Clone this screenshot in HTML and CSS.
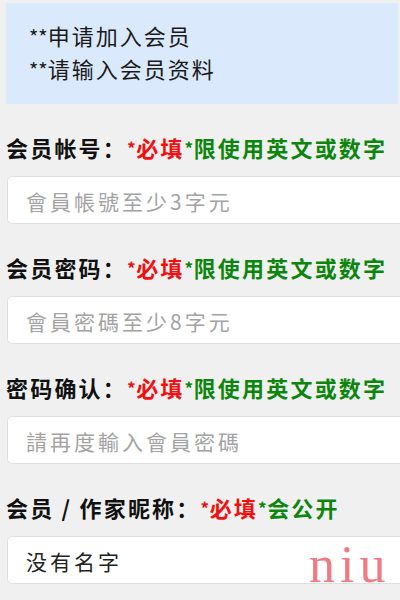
FILE: index.html
```html
<!DOCTYPE html>
<html lang="zh-CN">
<head>
<meta charset="utf-8">
<title>会员注册</title>
<link rel="stylesheet" href="styles.css">
</head>
<body>
<div class="page">
  <div class="notice">
    <p class="notice-line"><span class="stars">**</span>申请加入会员</p>
    <p class="notice-line"><span class="stars">**</span>请输入会员资料</p>
  </div>

  <form class="form">
    <div class="field">
      <label class="label">会员帐号：<span class="req"><span class="star">*</span>必填</span><span class="hint"><span class="star">*</span>限使用英文或数字</span></label>
      <input class="input" type="text" placeholder="會員帳號至少3字元">
    </div>
    <div class="field">
      <label class="label">会员密码：<span class="req"><span class="star">*</span>必填</span><span class="hint"><span class="star">*</span>限使用英文或数字</span></label>
      <input class="input" type="text" placeholder="會員密碼至少8字元">
    </div>
    <div class="field">
      <label class="label">密码确认：<span class="req"><span class="star">*</span>必填</span><span class="hint"><span class="star">*</span>限使用英文或数字</span></label>
      <input class="input" type="text" placeholder="請再度輸入會員密碼">
    </div>
    <div class="field">
      <label class="label">会员 / 作家昵称：<span class="req"><span class="star">*</span>必填</span><span class="hint"><span class="star">*</span>会公开</span></label>
      <input class="input" type="text" value="没有名字">
    </div>
  </form>
</div>
<div class="watermark">niu</div>
</body>
</html>
```

FILE: styles.css
```css
html, body {
  margin: 0;
  padding: 0;
}

body {
  background: #f0f0f0;
  font-family: "Noto Sans CJK SC", "Noto Sans", sans-serif;
  width: 400px;
  height: 600px;
  overflow: hidden;
  position: relative;
}

.page {
  padding: 3px 0 0 6px;
}

.notice {
  width: 392px;
  height: 101px;
  box-sizing: border-box;
  background: #dae9fb;
  padding: 16px 0 0 23px;
  margin-bottom: 28px;
}

.notice-line {
  margin: 0;
  font-size: 22px;
  line-height: 33px;
  letter-spacing: 2px;
  color: #1a1a1a;
}

.stars {
  letter-spacing: 0;
  font-size: 20px;
  line-height: 1;
}

.form {
  margin: 0;
}

.field {
  display: flex;
  flex-direction: column;
  margin-bottom: 28px;
}

.label {
  display: block;
  height: 30px;
  font-size: 22px;
  line-height: 30px;
  font-weight: bold;
  letter-spacing: 2.2px;
  color: #111;
  margin-bottom: 14px;
  white-space: nowrap;
}

.star {
  font-size: 17px;
  line-height: 1;
  letter-spacing: 0.5px;
  vertical-align: 2px;
}

.req {
  color: #f20f0f;
}

.hint {
  color: #0d860d;
}

.input {
  display: block;
  margin: 0 0 0 1px;
  width: 400px;
  height: 48px;
  box-sizing: border-box;
  border: 1px solid #dedede;
  border-radius: 5px;
  background: #fff;
  padding: 2px 0 0 18px;
  font-family: "Noto Sans CJK SC", "Noto Sans", sans-serif;
  font-size: 21px;
  letter-spacing: 3px;
  color: #222;
  outline: none;
}

.input::placeholder {
  color: #a3a3a3;
  opacity: 1;
}

.watermark {
  position: absolute;
  left: 309px;
  top: 540px;
  font-family: "Liberation Serif", serif;
  font-size: 52px;
  line-height: 50px;
  letter-spacing: 5px;
  color: rgba(236, 100, 110, 0.85);
  pointer-events: none;
}
```
